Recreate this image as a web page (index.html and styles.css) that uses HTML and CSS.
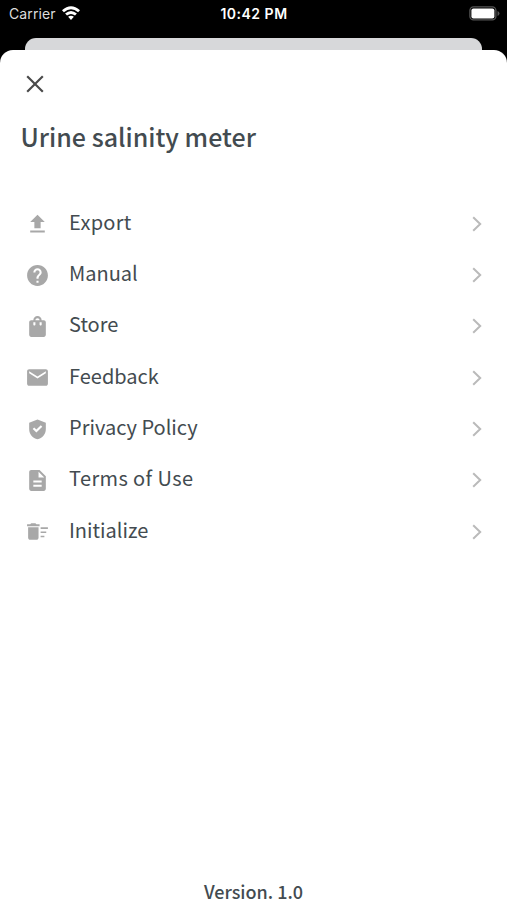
FILE: index.html
```html
<!DOCTYPE html>
<html lang="en">
<head>
<meta charset="utf-8">
<title>Urine salinity meter</title>
<link rel="stylesheet" href="styles.css">
</head>
<body>
<header class="status">
  <div class="carrier"><span>Carrier</span>
    <svg class="wifi" viewBox="0 0 18 14"><path d="M0 4.2Q9-3.6 18 4.2L16.1 6.3Q9 .2 1.9 6.3ZM3.1 7.5Q9 2.5 14.9 7.5L13 9.6Q9 6.3 5 9.6ZM6.1 10.8Q9 8.6 11.9 10.8L9 14Z"/></svg>
  </div>
  <time class="clock">10:42 PM</time>
  <svg class="battery" viewBox="0 0 31 15"><rect x=".9" y=".9" width="26" height="13" rx="3.6" fill="none" stroke="#555" stroke-width="1.3"/><rect x="2.4" y="2.4" width="23" height="10" rx="2" fill="#fff"/><path d="M28.5 5q2 .6 2 2.5t-2 2.5z" fill="#555"/></svg>
</header>
<div class="backcard"></div>
<main class="sheet">
  <svg class="close" viewBox="0 0 18 18"><path d="M1.2 1.2 16.8 16.8M16.8 1.2 1.2 16.8"/></svg>
  <h1>Urine salinity meter</h1>
  <nav class="menu">
    <a class="row"><svg class="icon" viewBox="0 0 24 24"><path d="M9 16h6v-6h4l-7-7-7 7h4zm-4 2h14v2H5z" transform="translate(0 .6)"/></svg><span class="label export">Export</span><svg class="chevron" viewBox="0 0 10 16"><path d="m1.2 1.2 7 6.8-7 6.8"/></svg></a>
    <a class="row"><svg class="icon" viewBox="0 0 24 24"><path d="M12 2C6.48 2 2 6.48 2 12s4.48 10 10 10 10-4.48 10-10S17.52 2 12 2zm1 17h-2v-2h2v2zm2.07-7.75-.9.92C13.45 12.9 13 13.5 13 15h-2v-.5c0-1.1.45-2.1 1.17-2.83l1.24-1.26c.37-.36.59-.86.59-1.41 0-1.1-.9-2-2-2s-2 .9-2 2H8c0-2.21 1.79-4 4-4s4 1.79 4 4c0 .88-.36 1.68-.93 2.25z"/></svg><span class="label">Manual</span><svg class="chevron" viewBox="0 0 10 16"><path d="m1.2 1.2 7 6.8-7 6.8"/></svg></a>
    <a class="row"><svg class="icon" viewBox="0 0 24 24"><path fill-rule="evenodd" d="M18 6h-2c0-2.21-1.79-4-4-4S8 3.79 8 6H6c-1.1 0-2 .9-2 2v12c0 1.1.9 2 2 2h12c1.1 0 2-.9 2-2V8c0-1.1-.9-2-2-2zm-8 4c0 .55-.45 1-1 1s-1-.45-1-1V8h2v2zm2-6c1.1 0 2 .9 2 2h-4c0-1.1.9-2 2-2zm4 6c0 .55-.45 1-1 1s-1-.45-1-1V8h2v2z"/></svg><span class="label">Store</span><svg class="chevron" viewBox="0 0 10 16"><path d="m1.2 1.2 7 6.8-7 6.8"/></svg></a>
    <a class="row"><svg class="icon" viewBox="0 0 24 24"><path d="M20 4H4c-1.1 0-2 .9-2 2v12c0 1.1.9 2 2 2h16c1.1 0 2-.9 2-2V6c0-1.1-.9-2-2-2zm0 4-8 5-8-5V6l8 5 8-5v2z"/></svg><span class="label">Feedback</span><svg class="chevron" viewBox="0 0 10 16"><path d="m1.2 1.2 7 6.8-7 6.8"/></svg></a>
    <a class="row"><svg class="icon" viewBox="0 0 24 24"><path d="M12 2.4 4 5.4v6.1c0 5.05 3.41 8.76 8 9.9 4.59-1.14 8-4.85 8-9.9V5.4l-8-3zm-1.06 12.54L7.4 11.4l1.41-1.41 2.12 2.12 4.24-4.24 1.41 1.41-5.64 5.66z"/></svg><span class="label">Privacy Policy</span><svg class="chevron" viewBox="0 0 10 16"><path d="m1.2 1.2 7 6.8-7 6.8"/></svg></a>
    <a class="row"><svg class="icon" viewBox="0 0 24 24"><path d="M14 2H6c-1.1 0-2 .9-2 2v16c0 1.1.89 2 1.99 2H18c1.1 0 2-.9 2-2V8l-6-6zm2 16H8v-2h8v2zm0-4H8v-2h8v2zm-3-5V3.5L18.5 9H13z"/></svg><span class="label terms">Terms of Use</span><svg class="chevron" viewBox="0 0 10 16"><path d="m1.2 1.2 7 6.8-7 6.8"/></svg></a>
    <a class="row"><svg class="icon" viewBox="0 0 24 24"><path d="M15 16h3.6v1.5H15zm0-8h7v1.5h-7zm0 4h5.4v1.5H15zM3 18c0 1.1.9 2 2 2h6c1.1 0 2-.9 2-2V8H3v10zM14 5h-3l-1-1H6L5 5H2v2h12z"/></svg><span class="label">Initialize</span><svg class="chevron" viewBox="0 0 10 16"><path d="m1.2 1.2 7 6.8-7 6.8"/></svg></a>
  </nav>
  <footer class="version">Version. 1.0</footer>
</main>
</body>
</html>
```
FILE: styles.css
```css
* { box-sizing: border-box; }
body {
  margin: 0;
  height: 900px;
  overflow: hidden;
  background: #000;
  color: #434b50;
  font-family: "Noto Sans CJK KR", "Noto Sans", sans-serif;
  display: flex;
  flex-direction: column;
}
.status {
  height: 38px;
  flex: none;
  display: grid;
  grid-template-columns: 1fr auto 1fr;
  align-items: start;
  padding: 5px 7px 0 9px;
  color: #fff;
  font: 14px/18px Inter, sans-serif;
}
.carrier { display: flex; gap: 6px; color: #ddd; letter-spacing: .1px; }
.wifi { width: 18px; height: 14px; margin-top: 1px; fill: #fff; }
.clock { font-weight: 600; letter-spacing: .5px; margin-right: 1px; }
.battery { width: 31px; height: 15px; justify-self: end; margin-top: 1px; }
.backcard {
  height: 12px;
  flex: none;
  margin: 0 25px;
  background: #d7d8da;
  border-radius: 11px 11px 0 0;
}
.sheet {
  flex: 1;
  background: #fff;
  border-radius: 13px 13px 0 0;
  display: flex;
  flex-direction: column;
}
.close {
  width: 18px;
  height: 18px;
  margin: 25px 0 0 26px;
  fill: none;
  stroke: #4a4a4a;
  stroke-width: 2.2;
}
h1 {
  margin: 25px 0 0 20.5px;
  font-size: 25px;
  line-height: 36px;
  font-weight: 500;
}
.menu { margin-top: 43px; display: flex; flex-direction: column; }
.row {
  height: 51.35px;
  display: flex;
  align-items: center;
  padding: 0 25px;
}
.icon { width: 25px; height: 25px; fill: #a8a8a8; margin-top: 2px; }
.label {
  flex: 1;
  margin: 0 0 2px 19px;
  font-size: 20px;
  line-height: 30px;
}
.label.export { letter-spacing: .3px; }
.label.terms { letter-spacing: .4px; }
.chevron {
  width: 10px;
  height: 16px;
  margin-top: 2px;
  fill: none;
  stroke: #bababa;
  stroke-width: 2;
}
.version {
  margin-top: auto;
  height: 17px;
  line-height: 17px;
  text-align: center;
  font-size: 18px;
  font-weight: 500;
}
```
